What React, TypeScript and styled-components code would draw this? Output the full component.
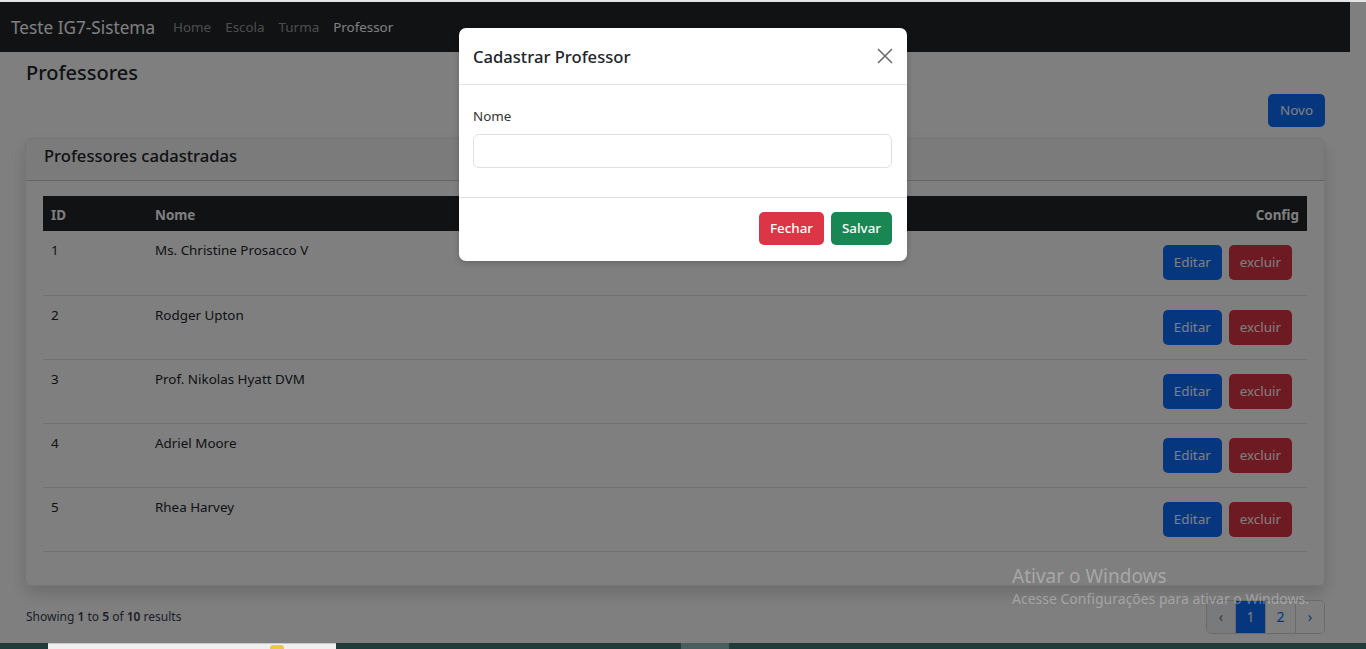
import React from 'react';
import styled, { createGlobalStyle } from 'styled-components';

const GlobalStyle = createGlobalStyle`
  * { box-sizing: border-box; }
  html, body { margin: 0; padding: 0; height: 100%; overflow: hidden; }
  body {
    font-family: "Noto Sans", "Open Sans", Arial, sans-serif;
    font-size: 13.4px;
    color: #212529;
    background: #fff;
  }
`;

const Screen = styled.div`
  width: 1366px;
  height: 649px;
  display: flex;
  flex-direction: column;
  overflow: hidden;
`;

const TopLine = styled.div`
  height: 2px;
  background: #e4e4e4;
  flex: none;
`;

const Viewport = styled.div`
  position: relative;
  flex: 1;
  overflow: hidden;
  background: #fff;
`;

const Shell = styled.div`
  width: 1350px;
`;

const Navbar = styled.nav`
  height: 50px;
  background: #212529;
  display: flex;
  align-items: center;
  padding: 0 11px;
`;

const Brand = styled.span`
  font-size: 17.2px;
  color: #fff;
  margin-right: 11px;
`;

const NavLink = styled.span<{ active?: boolean }>`
  font-size: 13.4px;
  color: ${p => (p.active ? '#fff' : 'rgba(255,255,255,0.55)')};
  padding: 0 7px;
`;

const Main = styled.main`
  padding: 0 25px;
`;

const Title = styled.h3`
  margin: 8px 0 0 1px;
  font-size: 20px;
  font-weight: 500;
  line-height: 26px;
`;

const Toolbar = styled.div`
  display: flex;
  justify-content: flex-end;
  margin-top: 8px;
`;

const Button = styled.button<{ variant: 'primary' | 'danger' | 'success' }>`
  font-family: inherit;
  font-size: 13.4px;
  line-height: 21px;
  border: none;
  border-radius: 5px;
  color: #fff;
  padding: 6px 12px;
  background: ${p =>
    p.variant === 'primary' ? '#0d6efd' :
    p.variant === 'danger' ? '#dc3545' : '#198754'};
`;

const Card = styled.section`
  margin-top: 11px;
  border: 1px solid rgba(0, 0, 0, 0.08);
  border-radius: 6px;
  box-shadow: 0 8px 16px rgba(0, 0, 0, 0.15);
  overflow: hidden;
`;

const CardHeader = styled.div`
  padding: 6px 18px 13px;
  background: #f7f7f7;
  border-bottom: 1px solid rgba(0, 0, 0, 0.175);
  font-size: 16.6px;
  font-weight: 500;
  line-height: 22px;
`;

const CardBody = styled.div`
  padding: 15px 17px 33px;
`;

const Table = styled.table`
  width: 100%;
  border-collapse: collapse;
`;

const Th = styled.th<{ align?: string }>`
  background: #212529;
  color: #fff;
  font-weight: 700;
  text-align: ${p => p.align || 'left'};
  height: 35px;
  padding: 3px 8px 0;
  font-size: 13.4px;
`;

const Row = styled.tr`
  height: 64px;
  border-bottom: 1px solid #dee2e6;
`;

const Td = styled.td`
  vertical-align: top;
  padding: 9px 8px 8px;
  line-height: 20px;
`;

const ActionCell = styled.td`
  vertical-align: top;
  padding: 14px 15px 0 0;
  text-align: right;
`;

const Actions = styled.div`
  display: inline-flex;
  gap: 7px;
`;

const RowButton = styled(Button)`
  padding: 7px 11px;
`;

const Footer = styled.div`
  margin-top: 14px;
  display: flex;
  justify-content: space-between;
  align-items: center;
`;

const Showing = styled.span`
  font-size: 12px;
  color: #374151;
  margin-left: 1px;
`;

const Pager = styled.div`
  display: flex;
  border: 1px solid #d1d5db;
  border-radius: 5px;
  overflow: hidden;
  height: 34px;
`;

const PageItem = styled.span<{ active?: boolean; muted?: boolean; w: number }>`
  width: ${p => p.w}px;
  display: flex;
  align-items: center;
  justify-content: center;
  border-left: 1px solid #d1d5db;
  font-size: 14px;
  background: ${p => (p.active ? '#0d6efd' : p.muted ? '#f3f4f6' : '#fff')};
  color: ${p => (p.active ? '#fff' : p.muted ? '#6b7280' : '#0d6efd')};
  &:first-child { border-left: none; }
`;

const Backdrop = styled.div`
  position: absolute;
  inset: 0;
  background: rgba(0, 0, 0, 0.5);
`;

const Modal = styled.div`
  position: absolute;
  top: 26px;
  left: 459px;
  width: 448px;
  background: #fff;
  border-radius: 7px;
  box-shadow: 0 2px 6px rgba(0, 0, 0, 0.2);
`;

const ModalHeader = styled.div`
  height: 57px;
  display: flex;
  align-items: center;
  justify-content: space-between;
  padding: 0 14px;
  border-bottom: 1px solid #dee2e6;
`;

const ModalTitle = styled.h5`
  margin: 0;
  font-size: 16.6px;
  font-weight: 500;
`;

const Close = styled.button`
  background: none;
  border: none;
  padding: 0;
  width: 16px;
  height: 16px;
  display: flex;
  color: #6c6c6c;
`;

const ModalBody = styled.div`
  padding: 21px 15px 29px 14px;
`;

const Label = styled.label`
  display: block;
  font-size: 13.4px;
  line-height: 21px;
  color: #333;
  margin-bottom: 7px;
`;

const Input = styled.input`
  display: block;
  width: 100%;
  height: 34px;
  border: 1px solid #dee2e6;
  border-radius: 6px;
`;

const ModalFooter = styled.div`
  border-top: 1px solid #dee2e6;
  padding: 14px 15px 16px;
  display: flex;
  justify-content: flex-end;
  gap: 7px;
`;

const ModalButton = styled(Button)`
  font-weight: 500;
  padding: 6px 11px;
`;

const Watermark = styled.div`
  position: absolute;
  left: 1012px;
  top: 563px;
  color: rgba(255, 255, 255, 0.32);
  line-height: 1.2;
`;

const WatermarkTitle = styled.div`
  font-size: 19px;
  font-weight: 400;
`;

const WatermarkText = styled.div`
  font-size: 14px;
  margin-top: 3px;
`;

const Taskbar = styled.div`
  height: 6px;
  flex: none;
  background: #213a3a;
  display: flex;
`;

const TaskThumb = styled.div<{ w: number; ml: number; light?: boolean }>`
  width: ${p => p.w}px;
  margin-left: ${p => p.ml}px;
  background: ${p => (p.light ? '#f0f0f0' : '#4b5e5e')};
  border-top: 1px solid ${p => (p.light ? '#c8c8c8' : '#4b5e5e')};
  position: relative;
`;

const Sun = styled.span`
  position: absolute;
  left: 222px;
  top: 1px;
  width: 14px;
  height: 5px;
  background: #e9c94a;
  border-radius: 3px 3px 0 0;
`;

const teachers = [
  { id: 1, name: 'Ms. Christine Prosacco V' },
  { id: 2, name: 'Rodger Upton' },
  { id: 3, name: 'Prof. Nikolas Hyatt DVM' },
  { id: 4, name: 'Adriel Moore' },
  { id: 5, name: 'Rhea Harvey' },
];

export default function App() {
  return (
    <>
      <GlobalStyle />
      <Screen>
        <TopLine />
        <Viewport>
          <Shell>
            <Navbar>
              <Brand>Teste IG7-Sistema</Brand>
              <NavLink>Home</NavLink>
              <NavLink>Escola</NavLink>
              <NavLink>Turma</NavLink>
              <NavLink active>Professor</NavLink>
            </Navbar>
            <Main>
              <Title>Professores</Title>
              <Toolbar>
                <Button variant="primary">Novo</Button>
              </Toolbar>
              <Card>
                <CardHeader>Professores cadastradas</CardHeader>
                <CardBody>
                  <Table>
                    <thead>
                      <tr>
                        <Th style={{ width: 104 }}>ID</Th>
                        <Th>Nome</Th>
                        <Th align="right">Config</Th>
                      </tr>
                    </thead>
                    <tbody>
                      {teachers.map(t => (
                        <Row key={t.id}>
                          <Td>{t.id}</Td>
                          <Td>{t.name}</Td>
                          <ActionCell>
                            <Actions>
                              <RowButton variant="primary">Editar</RowButton>
                              <RowButton variant="danger">excluir</RowButton>
                            </Actions>
                          </ActionCell>
                        </Row>
                      ))}
                    </tbody>
                  </Table>
                </CardBody>
              </Card>
              <Footer>
                <Showing>
                  Showing <b style={{ fontWeight: 600 }}>1</b> to <b style={{ fontWeight: 600 }}>5</b> of{' '}
                  <b style={{ fontWeight: 600 }}>10</b> results
                </Showing>
                <Pager>
                  <PageItem w={28} muted>‹</PageItem>
                  <PageItem w={30} active>1</PageItem>
                  <PageItem w={30}>2</PageItem>
                  <PageItem w={29}>›</PageItem>
                </Pager>
              </Footer>
            </Main>
          </Shell>
          <Backdrop />
          <Modal>
            <ModalHeader>
              <ModalTitle>Cadastrar Professor</ModalTitle>
              <Close aria-label="Fechar">
                <svg width="16" height="16" viewBox="0 0 16 16">
                  <path d="M1 1L15 15M15 1L1 15" stroke="currentColor" strokeWidth="1.6" />
                </svg>
              </Close>
            </ModalHeader>
            <ModalBody>
              <Label>Nome</Label>
              <Input />
            </ModalBody>
            <ModalFooter>
              <ModalButton variant="danger">Fechar</ModalButton>
              <ModalButton variant="success">Salvar</ModalButton>
            </ModalFooter>
          </Modal>
          <Watermark>
            <WatermarkTitle>Ativar o Windows</WatermarkTitle>
            <WatermarkText>Acesse Configurações para ativar o Windows.</WatermarkText>
          </Watermark>
        </Viewport>
        <Taskbar>
          <TaskThumb w={288} ml={48} light>
            <Sun />
          </TaskThumb>
          <TaskThumb w={48} ml={345} />
        </Taskbar>
      </Screen>
    </>
  );
}
